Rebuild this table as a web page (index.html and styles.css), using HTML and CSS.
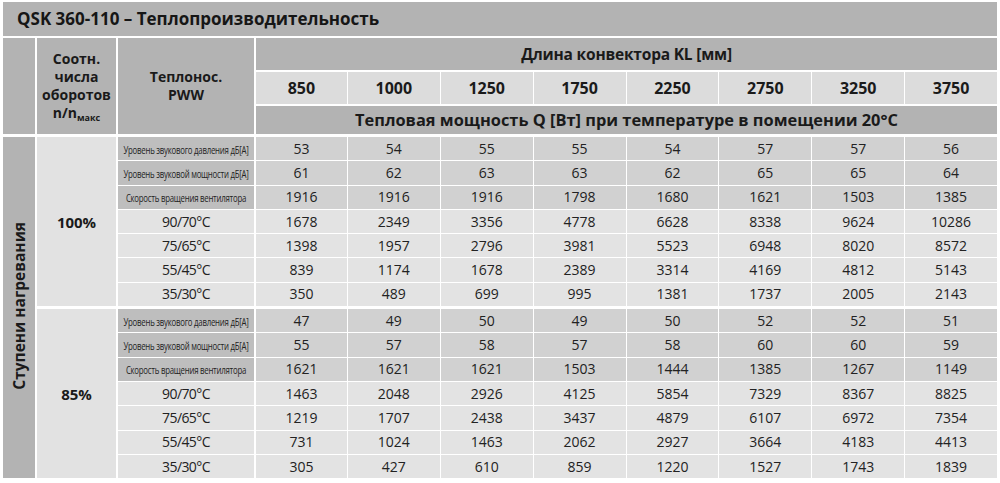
FILE: index.html
```html
<!DOCTYPE html>
<html lang="ru">
<head>
<meta charset="utf-8">
<title>QSK 360-110 – Теплопроизводительность</title>
<link rel="stylesheet" href="styles.css">
</head>
<body>
<div class="page">
<table class="heat">
  <colgroup>
    <col class="c-stage">
    <col class="c-ratio">
    <col class="c-label">
    <col class="c-num"><col class="c-num"><col class="c-num"><col class="c-num">
    <col class="c-num"><col class="c-num"><col class="c-num"><col class="c-num">
  </colgroup>
  <tr class="r-title">
    <td class="title" colspan="11">QSK 360-110 – Теплопроизводительность</td>
  </tr>
  <tr class="r-h1">
    <td class="hd first" rowspan="3"></td>
    <td class="hd b2" rowspan="3">Соотн.<br>числа<br>оборотов<br>n/n<sub>макс</sub></td>
    <td class="hd b2" rowspan="3">Теплонос.<br>PWW</td>
    <td class="hd b2 span span-len" colspan="8">Длина конвектора KL [мм]</td>
  </tr>
  <tr class="r-h2">
    <td class="len b2">850</td>
    <td class="len">1000</td>
    <td class="len">1250</td>
    <td class="len">1750</td>
    <td class="len">2250</td>
    <td class="len">2750</td>
    <td class="len">3250</td>
    <td class="len">3750</td>
  </tr>
  <tr class="r-h3">
    <td class="hd b2 span span-q" colspan="8">Тепловая мощность Q [Вт] при температуре в помещении 20°C</td>
  </tr>

  <tr class="r-data r-gstart">
    <td class="stage first" rowspan="14"><span class="vert">Ступени нагревания</span></td>
    <td class="pct b2" rowspan="7">100%</td>
    <td class="snd-l b2"><span class="cond">Уровень звукового давления дБ[A]</span></td>
    <td class="snd b2">53</td><td class="snd">54</td><td class="snd">55</td><td class="snd">55</td><td class="snd">54</td><td class="snd">57</td><td class="snd">57</td><td class="snd">56</td>
  </tr>
  <tr class="r-data">
    <td class="snd-l b2"><span class="cond">Уровень звуковой мощности дБ[A]</span></td>
    <td class="snd b2">61</td><td class="snd">62</td><td class="snd">63</td><td class="snd">63</td><td class="snd">62</td><td class="snd">65</td><td class="snd">65</td><td class="snd">64</td>
  </tr>
  <tr class="r-data">
    <td class="snd-l b2"><span class="cond">Скорость вращения вентилятора</span></td>
    <td class="snd b2">1916</td><td class="snd">1916</td><td class="snd">1916</td><td class="snd">1798</td><td class="snd">1680</td><td class="snd">1621</td><td class="snd">1503</td><td class="snd">1385</td>
  </tr>
  <tr class="r-data">
    <td class="tmp-l b2">90/70°C</td>
    <td class="tmp b2">1678</td><td class="tmp">2349</td><td class="tmp">3356</td><td class="tmp">4778</td><td class="tmp">6628</td><td class="tmp">8338</td><td class="tmp">9624</td><td class="tmp">10286</td>
  </tr>
  <tr class="r-data">
    <td class="tmp-l b2">75/65°C</td>
    <td class="tmp b2">1398</td><td class="tmp">1957</td><td class="tmp">2796</td><td class="tmp">3981</td><td class="tmp">5523</td><td class="tmp">6948</td><td class="tmp">8020</td><td class="tmp">8572</td>
  </tr>
  <tr class="r-data">
    <td class="tmp-l b2">55/45°C</td>
    <td class="tmp b2">839</td><td class="tmp">1174</td><td class="tmp">1678</td><td class="tmp">2389</td><td class="tmp">3314</td><td class="tmp">4169</td><td class="tmp">4812</td><td class="tmp">5143</td>
  </tr>
  <tr class="r-data">
    <td class="tmp-l b2">35/30°C</td>
    <td class="tmp b2">350</td><td class="tmp">489</td><td class="tmp">699</td><td class="tmp">995</td><td class="tmp">1381</td><td class="tmp">1737</td><td class="tmp">2005</td><td class="tmp">2143</td>
  </tr>

  <tr class="r-data r-gstart">
    <td class="pct b2" rowspan="7">85%</td>
    <td class="snd-l b2"><span class="cond">Уровень звукового давления дБ[A]</span></td>
    <td class="snd b2">47</td><td class="snd">49</td><td class="snd">50</td><td class="snd">49</td><td class="snd">50</td><td class="snd">52</td><td class="snd">52</td><td class="snd">51</td>
  </tr>
  <tr class="r-data">
    <td class="snd-l b2"><span class="cond">Уровень звуковой мощности дБ[A]</span></td>
    <td class="snd b2">55</td><td class="snd">57</td><td class="snd">58</td><td class="snd">57</td><td class="snd">58</td><td class="snd">60</td><td class="snd">60</td><td class="snd">59</td>
  </tr>
  <tr class="r-data">
    <td class="snd-l b2"><span class="cond">Скорость вращения вентилятора</span></td>
    <td class="snd b2">1621</td><td class="snd">1621</td><td class="snd">1621</td><td class="snd">1503</td><td class="snd">1444</td><td class="snd">1385</td><td class="snd">1267</td><td class="snd">1149</td>
  </tr>
  <tr class="r-data">
    <td class="tmp-l b2">90/70°C</td>
    <td class="tmp b2">1463</td><td class="tmp">2048</td><td class="tmp">2926</td><td class="tmp">4125</td><td class="tmp">5854</td><td class="tmp">7329</td><td class="tmp">8367</td><td class="tmp">8825</td>
  </tr>
  <tr class="r-data">
    <td class="tmp-l b2">75/65°C</td>
    <td class="tmp b2">1219</td><td class="tmp">1707</td><td class="tmp">2438</td><td class="tmp">3437</td><td class="tmp">4879</td><td class="tmp">6107</td><td class="tmp">6972</td><td class="tmp">7354</td>
  </tr>
  <tr class="r-data">
    <td class="tmp-l b2">55/45°C</td>
    <td class="tmp b2">731</td><td class="tmp">1024</td><td class="tmp">1463</td><td class="tmp">2062</td><td class="tmp">2927</td><td class="tmp">3664</td><td class="tmp">4183</td><td class="tmp">4413</td>
  </tr>
  <tr class="r-data">
    <td class="tmp-l b2">35/30°C</td>
    <td class="tmp b2">305</td><td class="tmp">427</td><td class="tmp">610</td><td class="tmp">859</td><td class="tmp">1220</td><td class="tmp">1527</td><td class="tmp">1743</td><td class="tmp">1839</td>
  </tr>
</table>
</div>
</body>
</html>
```

FILE: styles.css
```css
html, body {
  margin: 0;
  padding: 0;
  background: #ffffff;
}

body {
  font-family: "Open Sans", "Liberation Sans", sans-serif;
  color: #1c1c1c;
}

.page {
  padding: 2px 3px;
}

.heat {
  width: 994px;
  table-layout: fixed;
  border-collapse: separate;
  border-spacing: 0;
}

.c-stage { width: 32px; }
.c-ratio { width: 81px; }
.c-label { width: 138px; }

.heat td {
  box-sizing: border-box;
  padding: 0;
  text-align: center;
  vertical-align: middle;
  border-left: 1px solid #ffffff;
  border-top: 1px solid #ffffff;
  font-size: 14px;
  line-height: 18px;
}

.heat td.first { border-left: 0; }
.heat td.b2 { border-left-width: 2px; }

/* row heights */
.r-title { height: 34px; }
.r-h1 { height: 34px; }
.r-h2 { height: 34px; }
.r-h3 { height: 30px; }
.r-data { height: 24.3px; }
.r-gstart { height: 26.3px; }

.r-h1 td, .r-h2 td, .r-h3 td { border-top-width: 2px; }
.r-gstart td { border-top-width: 3px; }

.heat td.title {
  border: 0;
  background: #b3b3b3;
  text-align: left;
  padding-left: 14px;
  font-weight: 700;
  font-size: 17px;
  color: #161616;
}

.hd {
  background: #b3b3b3;
  font-weight: 700;
  color: #1a1a1a;
}

.heat td.span-len {
  font-size: 15.5px;
  letter-spacing: -0.2px;
}

.heat td.span-q {
  font-size: 16.4px;
}

.hd sub {
  font-size: 9px;
  vertical-align: -3px;
  line-height: 0;
}

.heat td.len {
  background: #dcdcdc;
  font-weight: 700;
  font-size: 16px;
  color: #1a1a1a;
}

.stage {
  background: #b3b3b3;
}

.vert {
  display: inline-block;
  writing-mode: vertical-rl;
  transform: rotate(180deg);
  font-weight: 700;
  font-size: 15.5px;
  line-height: 18px;
  color: #1a1a1a;
}

.heat td.pct {
  background: #e2e2e2;
  font-weight: 700;
  font-size: 15px;
  color: #1a1a1a;
}

.snd-l {
  background: #bebebe;
  white-space: nowrap;
}

.cond {
  display: inline-block;
  width: 170px;
  margin: 0 -30px;
  text-align: center;
  font-size: 10px;
  line-height: 12px;
  color: #222222;
  letter-spacing: -0.3px;
  transform: scaleX(0.78);
  transform-origin: center;
}

.snd {
  background: #d1d1d1;
  color: #222222;
}

.tmp-l, .tmp {
  background: #e3e3e3;
  color: #222222;
}

.heat td.tmp-l {
  letter-spacing: -0.6px;
}
```
